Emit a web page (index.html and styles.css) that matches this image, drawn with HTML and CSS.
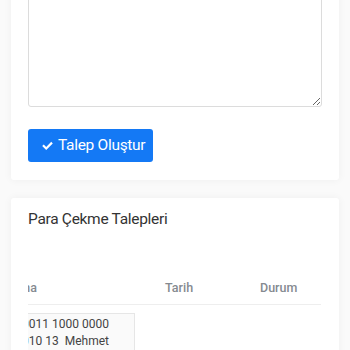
FILE: index.html
```html
<!DOCTYPE html>
<html lang="tr">
<head>
<meta charset="utf-8">
<title>Para Çekme</title>
<link rel="stylesheet" href="styles.css">
</head>
<body>
<div class="page">
  <section class="card form-card">
    <textarea class="note"></textarea>
    <button class="btn-primary" type="button">
      <svg class="check" viewBox="0 0 16 16" width="13" height="13"><path d="M1.5 8.6l1.9-1.9 3 3 6.2-6.2 1.9 1.9-8.1 8.1z" fill="#fff"/></svg>
      <span>Talep Oluştur</span>
    </button>
  </section>
  <section class="card list-card">
    <h2 class="title">Para Çekme Talepleri</h2>
    <div class="table-wrap">
      <div class="table-inner">
        <div class="thead">
          <div class="th col-acc">Açıklama</div>
          <div class="th col-date">Tarih</div>
          <div class="th col-status">Durum</div>
        </div>
        <div class="trow">
          <div class="td col-acc"><div class="acc-box">TR12 0001 0011 1000 0000<br>3456 0010 13&nbsp; Mehmet</div></div>
          <div class="td col-date"></div>
          <div class="td col-status"></div>
        </div>
      </div>
    </div>
  </section>
</div>
</body>
</html>
```
FILE: styles.css
```css
* { box-sizing: border-box; }
html, body { margin: 0; padding: 0; }
body {
  background: #fafafa;
  font-family: "Roboto", "Noto Sans", sans-serif;
  color: #333;
  width: 350px;
  height: 350px;
  overflow: hidden;
}
.page {
  padding: 0 11px;
  margin-top: -20px;
  display: flex;
  flex-direction: column;
  gap: 18px;
}
.card {
  background: #fff;
  box-shadow: 0 0 8px rgba(0,0,0,0.05);
  border-radius: 3px;
}
.form-card {
  padding: 0 17px 18px;
  display: flex;
  flex-direction: column;
  align-items: flex-start;
  gap: 22px;
}
.note {
  display: block;
  width: 294px;
  height: 127px;
  border: 1px solid #dcdcdc;
  border-radius: 3px;
  background: #fff;
  resize: vertical;
}
.btn-primary {
  display: flex;
  align-items: center;
  gap: 4px;
  height: 33px;
  width: 125px;
  padding: 0 0 0 13px;
  border: 0;
  border-radius: 3px;
  background: #1479f5;
  color: #fff;
  font-family: "Roboto", sans-serif;
  font-size: 15.5px;
  letter-spacing: -0.3px;
  line-height: 1;
}
.check { display: block; }
.list-card {
  padding: 10px 17px 0;
  height: 200px;
}
.title {
  margin: 0;
  font-size: 15.5px;
  letter-spacing: -0.3px;
  font-weight: 400;
  color: #333;
  line-height: 22px;
}
.table-wrap {
  margin-top: 46px;
  overflow: hidden;
  width: 293px;
}
.table-inner {
  margin-left: -140px;
  width: 450px;
  font-size: 12.5px;
}
.thead, .trow { display: flex; }
.thead { border-bottom: 1px solid #eee; margin-left: 140px; }
.thead .col-acc { margin-left: -140px; }
.th {
  font-weight: 500;
  color: #858a90;
  padding: 3px 0 7px;
  line-height: 18px;
}
.col-acc { width: 277px; flex: none; }
.col-date { width: 95px; flex: none; }
.col-status { width: 70px; flex: none; }
.th.col-acc { text-align: right; padding-right: 128px; }
.td { padding-top: 8px; }
.acc-box {
  width: 247px;
  border: 1px solid #e6e6e6;
  background: #fafafa;
  color: #444;
  font-size: 12px;
  line-height: 17px;
  padding: 2px 25px 3px 8px;
  text-align: right;
  white-space: nowrap;
  overflow: hidden;
}
```
